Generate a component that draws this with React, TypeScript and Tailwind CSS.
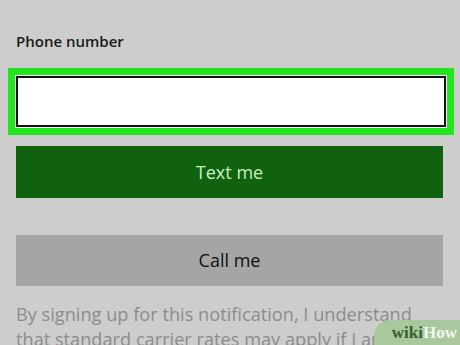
export default function App() {
  return (
    <main className="relative h-[345px] w-[460px] overflow-hidden bg-[#cdcdcd] font-['Open_Sans',sans-serif]">
      <div className="flex flex-col px-4 pt-[31px]">
        <p className="text-[15px] font-semibold leading-[20px] text-[#1a1a1a]">Phone number</p>

        <div className="-mx-2 mt-[17px] w-[446px] bg-[#22e51f] p-[7px]">
          <div className="bg-white p-px">
            <div className="h-[51px] border-2 border-[#111] bg-white" />
          </div>
        </div>

        <button className="mt-[11px] flex h-[52px] w-[427px] items-center justify-center bg-[#10620f] text-[18px] text-[#c9efc3]">
          Text me
        </button>

        <button className="mt-[37px] flex h-[51px] w-[427px] items-center justify-center bg-[#a5a5a5] text-[18px] text-[#111]">
          Call me
        </button>

        <p className="mt-[16px] text-[18.2px] leading-[25px] text-[#8c8c8c]">
          By signing up for this notification, I understand that standard carrier rates may apply if I am
        </p>
      </div>

      <div className="absolute bottom-0 right-0 flex h-[25px] w-[86px] items-center justify-end rounded-tl-[16px] bg-[#a9c89d] pr-[3px] font-['Liberation_Serif',serif] text-[17px] font-bold leading-none">
        <span className="text-[#37602f]">wiki</span>
        <span className="text-[#f2f6ee]">How</span>
      </div>
    </main>
  )
}
